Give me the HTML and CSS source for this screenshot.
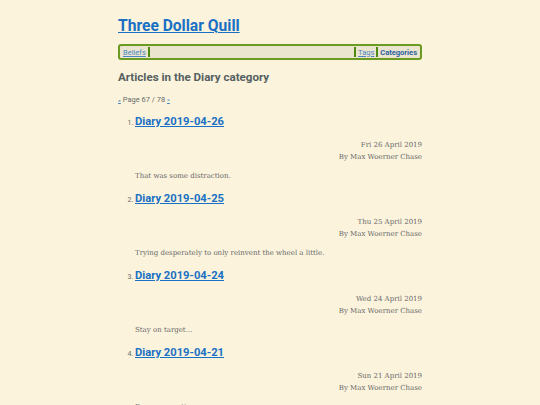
FILE: index.html
```html
<!DOCTYPE html>
<html>
<head>
<meta charset="utf-8">
<link rel="stylesheet" href="styles.css">
</head>
<body>
<div class="page">
  <h1 class="site-title"><a href="#">Three Dollar Quill</a></h1>
  <nav class="nav">
    <a href="#" class="nav-link">Beliefs</a>
    <span class="sep"></span>
    <span class="spacer"></span>
    <span class="sep"></span>
    <a href="#" class="nav-link">Tags</a>
    <span class="sep"></span>
    <a href="#" class="nav-link current">Categories</a>
  </nav>
  <h2 class="heading">Articles in the Diary category</h2>
  <p class="pager"><a href="#">«</a> Page 67 / 78 <a href="#">»</a></p>
  <ol class="articles">
    <li class="article">
      <a href="#" class="article-title">Diary 2019-04-26</a>
      <div class="meta"><div>Fri 26 April 2019</div><div>By Max Woerner Chase</div></div>
      <p class="summary">That was some distraction.</p>
    </li>
    <li class="article">
      <a href="#" class="article-title">Diary 2019-04-25</a>
      <div class="meta"><div>Thu 25 April 2019</div><div>By Max Woerner Chase</div></div>
      <p class="summary">Trying desperately to only reinvent the wheel a little.</p>
    </li>
    <li class="article">
      <a href="#" class="article-title">Diary 2019-04-24</a>
      <div class="meta"><div>Wed 24 April 2019</div><div>By Max Woerner Chase</div></div>
      <p class="summary">Stay on target...</p>
    </li>
    <li class="article">
      <a href="#" class="article-title">Diary 2019-04-21</a>
      <div class="meta"><div>Sun 21 April 2019</div><div>By Max Woerner Chase</div></div>
      <p class="summary">Progress continues.</p>
    </li>
  </ol>
</div>
</body>
</html>
```
FILE: styles.css
```css
html, body {
  margin: 0;
  padding: 0;
  background: #fbf3dc;
}
body {
  font-family: "DejaVu Serif", serif;
  color: #5a5a5a;
}
.page {
  width: 304px;
  margin: 0 auto;
  padding-top: 16px;
}
.site-title {
  margin: 0;
  font-family: Roboto, sans-serif;
  font-size: 15.6px;
  font-weight: 700;
  line-height: 21px;
}
.site-title a {
  color: #1a70c4;
}
.nav {
  margin-top: 7px;
  display: flex;
  align-items: center;
  height: 12px;
  border: 2px solid #6b9a22;
  border-radius: 3px;
  background: #ebe4cf;
  padding: 0 1px;
  font-family: Roboto, sans-serif;
  font-size: 7.5px;
}
.nav-link {
  color: #4a86c2;
  padding: 0 2px;
}
.nav-link.current {
  font-weight: 700;
  text-decoration: none;
  color: #2a62a0;
}
.sep {
  width: 2px;
  height: 10px;
  background: #4f8a10;
}
.spacer {
  flex: 1;
}
.heading {
  margin: 9px 0 0;
  font-family: Roboto, sans-serif;
  font-size: 11.6px;
  font-weight: 700;
  color: #556060;
  line-height: 16px;
}
.pager {
  margin: 10px 0 0;
  font-family: Roboto, sans-serif;
  font-size: 7.5px;
  color: #6a6a6a;
}
.pager a {
  color: #4a86c2;
  font-size: 6px;
}
.articles {
  margin: 10px 0 0;
  padding-left: 17px;
  font-family: Roboto, sans-serif;
  font-size: 7px;
  color: #6a6a6a;
}
.article-title {
  font-size: 11.2px;
  font-weight: 700;
  color: #1a70c4;
  line-height: 15px;
}
.meta {
  margin-top: 10px;
  text-align: right;
  font-family: "DejaVu Serif", serif;
  font-size: 7px;
  line-height: 12px;
  color: #6a6a6a;
}
.summary {
  margin: 7px 0 9px;
  font-family: "DejaVu Serif", serif;
  font-size: 7px;
  line-height: 12px;
  color: #6a6a6a;
}
```
